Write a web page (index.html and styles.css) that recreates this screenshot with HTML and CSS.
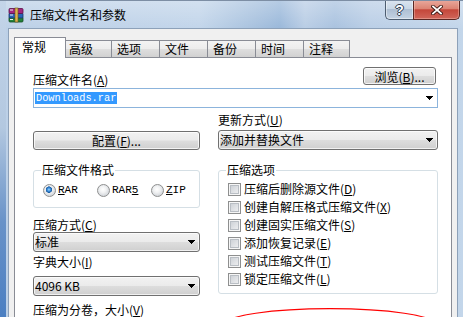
FILE: index.html
```html
<!DOCTYPE html>
<html lang="zh-CN">
<head>
<meta charset="utf-8">
<title>压缩文件名和参数</title>
<link rel="stylesheet" href="styles.css">
</head>
<body>
<div class="window">
  <div class="titlebar">
    <svg class="app-icon" viewBox="0 0 16 16" aria-hidden="true">
      <rect x="1" y="10" width="14" height="5" rx="1" fill="#23833a" stroke="#124a20" stroke-width="0.8"/>
      <rect x="1" y="6" width="14" height="5" rx="1" fill="#2a64b8" stroke="#143567" stroke-width="0.8"/>
      <rect x="1" y="1.5" width="14" height="5" rx="1" fill="#a2257f" stroke="#5a1046" stroke-width="0.8"/>
      <path d="M2 3h3M2 8h3M2 12.5h3" stroke="#f4eef0" stroke-width="1"/>
      <rect x="7" y="1" width="3" height="14" fill="#dcb450" stroke="#6b5318" stroke-width="0.6"/>
    </svg>
    <span class="title">压缩文件名和参数</span>
    <div class="caps">
      <div class="cap help"><span>?</span></div>
      <div class="cap close">
        <svg viewBox="0 0 12 10" aria-hidden="true">
          <path d="M2 1.5L10 8.5M10 1.5L2 8.5" stroke="#3b1712" stroke-width="3.6" stroke-linecap="square"/>
          <path d="M2 1.5L10 8.5M10 1.5L2 8.5" stroke="#ffffff" stroke-width="1.8" stroke-linecap="square"/>
        </svg>
      </div>
    </div>
  </div>

  <div class="client">
    <div class="tabs">
      <div class="tab active">常规</div>
      <div class="tab">高级</div>
      <div class="tab">选项</div>
      <div class="tab">文件</div>
      <div class="tab">备份</div>
      <div class="tab">时间</div>
      <div class="tab last">注释</div>
    </div>

    <div class="panel">
      <div class="head">
        <span class="lbl head-lbl">压缩文件名(<u>A</u>)</span>
        <button class="btn browse">浏览(<u>B</u>)...</button>
      </div>
      <div class="edit-combo">
        <span class="sel">Downloads.rar</span>
        <svg class="arr" viewBox="0 0 7 4" aria-hidden="true"><path d="M0 0h7v1h-1v1h-1v1h-1v1h-1v-1h-1v-1h-1v-1h-1z"/></svg>
      </div>

      <div class="cols">
        <div class="col col-left">
          <button class="btn config">配置(<u>F</u>)...</button>
          <fieldset class="group fmt">
            <legend>压缩文件格式</legend>
            <div class="radios">
              <div class="ritem"><span class="radio on"></span><span class="mono"><u>R</u>AR</span></div>
              <div class="ritem"><span class="radio"></span><span class="mono">RAR<u>5</u></span></div>
              <div class="ritem"><span class="radio"></span><span class="mono"><u>Z</u>IP</span></div>
            </div>
          </fieldset>
          <div class="lbl l-method">压缩方式(<u>C</u>)</div>
          <div class="drop"><span>标准</span><svg class="arr" viewBox="0 0 7 4" aria-hidden="true"><path d="M0 0h7v1h-1v1h-1v1h-1v1h-1v-1h-1v-1h-1v-1h-1z"/></svg></div>
          <div class="lbl l-dict">字典大小(<u>I</u>)</div>
          <div class="drop d-dict"><span>4096 KB</span><svg class="arr" viewBox="0 0 7 4" aria-hidden="true"><path d="M0 0h7v1h-1v1h-1v1h-1v1h-1v-1h-1v-1h-1v-1h-1z"/></svg></div>
          <div class="lbl l-vol">压缩为分卷，大小(<u>V</u>)</div>
        </div>

        <div class="col col-right">
          <div class="lbl l-update">更新方式(<u>U</u>)</div>
          <div class="drop"><span>添加并替换文件</span><svg class="arr" viewBox="0 0 7 4" aria-hidden="true"><path d="M0 0h7v1h-1v1h-1v1h-1v1h-1v-1h-1v-1h-1v-1h-1z"/></svg></div>
          <fieldset class="group opts">
            <legend>压缩选项</legend>
            <div class="crow"><span class="check"></span><span>压缩后删除源文件(<u>D</u>)</span></div>
            <div class="crow"><span class="check"></span><span>创建自解压格式压缩文件(<u>X</u>)</span></div>
            <div class="crow"><span class="check"></span><span>创建固实压缩文件(<u>S</u>)</span></div>
            <div class="crow"><span class="check"></span><span>添加恢复记录(<u>E</u>)</span></div>
            <div class="crow"><span class="check"></span><span>测试压缩文件(<u>T</u>)</span></div>
            <div class="crow"><span class="check"></span><span>锁定压缩文件(<u>L</u>)</span></div>
          </fieldset>
        </div>
      </div>
    </div>
  </div>

  <svg class="annot" viewBox="0 0 243 17" aria-hidden="true">
    <ellipse cx="110" cy="23.2" rx="105" ry="15.5" fill="none" stroke="#ff0000" stroke-width="1.2"/>
  </svg>
</div>
</body>
</html>
```

FILE: styles.css
```css
* { box-sizing: border-box; }
html, body { margin: 0; padding: 0; }
body {
  width: 463px;
  height: 317px;
  overflow: hidden;
  font-family: "Noto Sans CJK SC", "Noto Sans", sans-serif;
  font-size: 12px;
  color: #000;
}
u { text-decoration: underline; text-underline-offset: 1px; }

.window {
  position: relative;
  width: 463px;
  height: 317px;
  overflow: hidden;
  display: flex;
  flex-direction: column;
  border-top: 1px solid #7d8ea4;
  background:
    linear-gradient(to bottom, #c4d5e9 0%, #b3c8e0 40%, #6892c8 70%, #4b7fc2 100%) 0 0 / 6px 100% no-repeat,
    linear-gradient(to bottom, rgba(255,255,255,0.28) 0, rgba(255,255,255,0) 28px),
    linear-gradient(to right, #bcd0e7 0, #c2d5ea 200px, #a7c1de 255px, #9ab8da 280px, #b9cde5 305px, #a9c2df 335px, #bacee6 370px, #c3d6ea 463px);
}

/* title bar */
.titlebar {
  height: 27px;
  display: flex;
  align-items: flex-start;
  padding-left: 8px;
}
.app-icon { width: 16px; height: 16px; margin-top: 6px; flex: none; }
.title {
  margin-left: 6px;
  margin-top: 6px;
  line-height: 16px;
  font-size: 12px;
  color: #000;
}
.caps {
  margin-left: auto;
  margin-right: 3px;
  margin-top: -1px;
  display: flex;
}
.cap {
  height: 20px;
  display: flex;
  align-items: center;
  justify-content: center;
}
.help {
  width: 28px;
  border: 1px solid #4d5d70;
  border-top: none;
  border-right: none;
  border-radius: 0 0 0 5px;
  background: linear-gradient(to bottom, #dbe5f0 0%, #c9d7e6 45%, #aebfd3 50%, #c4d3e3 100%);
  box-shadow: inset 0 0 0 1px rgba(255,255,255,0.45);
}
.help span {
  font-family: "Liberation Sans", sans-serif;
  font-weight: bold;
  font-size: 14px;
  line-height: 14px;
  color: #fff;
  text-shadow: -1px 0 #2c3c50, 1px 0 #2c3c50, 0 -1px #2c3c50, 0 1px #2c3c50;
}
.close {
  width: 47px;
  border: 1px solid #5a2723;
  border-top: none;
  border-radius: 0 0 5px 0;
  background: linear-gradient(to bottom, #e9aa9e 0%, #dc8474 45%, #c4473a 52%, #d0665a 100%);
  box-shadow: inset 0 0 0 1px rgba(255,220,210,0.35);
}
.close svg { width: 12px; height: 10px; }

/* client area */
.client {
  flex: 1;
  min-height: 0;
  margin: 0 5px 0 8px;
  background: #f0f0f0;
  border: 1px solid #8da1b9;
  border-bottom: none;
  padding: 8px 5px 0;
  display: flex;
  flex-direction: column;
}

.tabs {
  display: flex;
  align-items: flex-end;
  height: 20px;
  padding-left: 1px;
  flex: none;
}
.tab {
  width: 49px;
  height: 17px;
  margin-right: -1px;
  border: 1px solid #898c95;
  border-bottom: none;
  padding-left: 5px;
  line-height: 16px;
  background: linear-gradient(to bottom, #f3f3f3 0%, #ececec 50%, #dedede 52%, #d1d1d1 100%);
  flex: none;
}
.tab.last { width: 47px; }
.tab.active {
  position: relative;
  z-index: 1;
  width: 52px;
  height: 21px;
  margin-left: -1px;
  margin-right: -3px;
  margin-bottom: -1px;
  padding-left: 7px;
  padding-top: 1px;
  background: #fff;
}

.panel {
  flex: 1;
  background: #fff;
  border: 1px solid #898c95;
  border-bottom: none;
  padding: 9px 13px 0 18px;
}

.lbl { line-height: 14px; white-space: nowrap; }

.head {
  display: flex;
  justify-content: space-between;
  align-items: flex-start;
  height: 21px;
}
.head-lbl { margin-top: 6px; }

button { font-family: inherit; font-size: 12px; color: #000; margin: 0; padding: 0; }
.btn {
  border: 1px solid #707070;
  border-radius: 3px;
  background: linear-gradient(to bottom, #f2f2f2 0%, #ebebeb 48%, #dddddd 52%, #cfcfcf 100%);
  box-shadow: inset 0 0 0 1px rgba(255,255,255,0.75);
  text-align: center;
  line-height: 15px;
}
.browse { width: 73px; height: 18px; margin-right: 2px; }

.edit-combo {
  height: 20px;
  border: 1px solid #8cb4dc;
  background: #fff;
  display: flex;
  align-items: center;
  padding: 0 4px 0 1px;
}
.sel {
  font-family: "Liberation Mono", monospace;
  font-size: 10.3px;
  line-height: 12px;
  background: #3399ff;
  color: #fff;
  padding: 0 1px;
}
.arr { width: 7px; height: 4px; margin-left: auto; flex: none; shape-rendering: crispEdges; }
.arr path { fill: #000; }

.cols {
  display: flex;
  align-items: flex-start;
  gap: 18px;
  margin-top: 5px;
}
.col { display: flex; flex-direction: column; }
.col-left { width: 167px; flex: none; }
.col-right { flex: 1; min-width: 0; }

.config { margin-top: 18px; height: 19px; width: 100%; }

.l-update { margin-bottom: 3px; }

.drop {
  height: 20px;
  border: 1px solid #707070;
  border-radius: 3px;
  background: linear-gradient(to bottom, #f2f2f2 0%, #ebebeb 48%, #dddddd 52%, #cfcfcf 100%);
  box-shadow: inset 0 0 0 1px rgba(255,255,255,0.7);
  display: flex;
  align-items: center;
  padding: 0 4px 0 1px;
  line-height: 14px;
}

.group {
  margin: 13px 0 0;
  min-width: 0;
  border: 1px solid #d5dfe5;
  border-radius: 3px;
}
.group legend { padding: 0 1px; line-height: 14px; }
.fmt { padding: 6px 6px 10px 7px; }
.opts { padding: 3px 6px 5px 7px; }

.radios { display: flex; height: 14px; align-items: center; }
.ritem { width: 54px; display: flex; align-items: center; gap: 2px; flex: none; }
.ritem:first-child { margin-left: 2px; }
.mono {
  font-family: "Liberation Mono", monospace;
  font-size: 11px;
  line-height: 14px;
}
.radio {
  width: 13px;
  height: 13px;
  flex: none;
  border-radius: 50%;
  border: 1px solid #8e8f8f;
  background: radial-gradient(circle at 45% 40%, #ffffff 0, #f1f2f3 35%, #cfd3d8 80%);
}
.radio.on {
  background:
    radial-gradient(circle at 45% 42%, #9fd6ff 0, #3a8fdc 1.6px, #1b5aa0 3px, rgba(27,90,160,0) 3.4px),
    radial-gradient(circle at 45% 40%, #ffffff 0, #f1f2f3 35%, #cfd3d8 80%);
}

.crow {
  height: 18px;
  display: flex;
  align-items: center;
  gap: 3px;
  white-space: nowrap;
  line-height: 14px;
}
.check {
  width: 13px;
  height: 13px;
  flex: none;
  margin-left: 2px;
  border: 1px solid #8e8f8f;
  background: linear-gradient(135deg, #c6cbd1 0%, #e2e4e7 60%, #f4f4f5 100%);
  box-shadow: inset 0 0 0 1px #f6f6f6, inset 0 0 0 2px #b9bec4;
}

.l-method { margin-top: 10px; }
.l-dict { margin-top: 3px; }
.d-dict { margin-top: 7px; }
.l-vol { margin-top: 7px; }

/* red hand-drawn annotation over the dialog */
.annot {
  position: absolute;
  left: 220px;
  top: 300px;
  width: 243px;
  height: 17px;
}
```
